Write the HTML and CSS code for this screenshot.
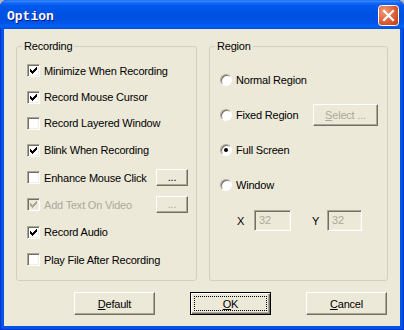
FILE: index.html
```html
<!DOCTYPE html>
<html>
<head>
<meta charset="utf-8">
<link rel="stylesheet" href="styles.css">
</head>
<body>
<div class="window">
  <div class="titlebar">
    <span class="title">Option</span>
    <span class="close">
      <svg width="21" height="21" viewBox="0 0 21 21">
        <defs>
          <radialGradient id="cg" cx="0.3" cy="0.3" r="0.9">
            <stop offset="0" stop-color="#F19A7A"/>
            <stop offset="0.5" stop-color="#E1653E"/>
            <stop offset="1" stop-color="#C23E17"/>
          </radialGradient>
        </defs>
        <rect x="0.5" y="0.5" width="20" height="20" rx="3" fill="url(#cg)" stroke="#fff"/>
        <path d="M6 6 L15 15 M15 6 L6 15" stroke="#fff" stroke-width="2.2" stroke-linecap="square"/>
      </svg>
    </span>
  </div>
  <div class="client">
    <div class="groups">
      <fieldset class="group group-rec">
        <legend>Recording</legend>
        <div class="gbody rec-body">
          <div class="row"><span class="cb"><svg class="chk" width="7" height="7" viewBox="0 0 7 7"><path d="M0 2h1v3h-1z M1 3h1v3h-1z M2 4h1v3h-1z M3 3h1v3h-1z M4 2h1v3h-1z M5 1h1v3h-1z M6 0h1v3h-1z"/></svg></span><span class="lbl">Minimize When Recording</span></div>
          <div class="row"><span class="cb"><svg class="chk" width="7" height="7" viewBox="0 0 7 7"><path d="M0 2h1v3h-1z M1 3h1v3h-1z M2 4h1v3h-1z M3 3h1v3h-1z M4 2h1v3h-1z M5 1h1v3h-1z M6 0h1v3h-1z"/></svg></span><span class="lbl">Record Mouse Cursor</span></div>
          <div class="row"><span class="cb"></span><span class="lbl">Record Layered Window</span></div>
          <div class="row"><span class="cb"><svg class="chk" width="7" height="7" viewBox="0 0 7 7"><path d="M0 2h1v3h-1z M1 3h1v3h-1z M2 4h1v3h-1z M3 3h1v3h-1z M4 2h1v3h-1z M5 1h1v3h-1z M6 0h1v3h-1z"/></svg></span><span class="lbl">Blink When Recording</span></div>
          <div class="row"><span class="cb"></span><span class="lbl">Enhance Mouse Click</span><span class="btn mini">...</span></div>
          <div class="row"><span class="cb cb-dis"><svg class="chk" width="7" height="7" viewBox="0 0 7 7"><path d="M0 2h1v3h-1z M1 3h1v3h-1z M2 4h1v3h-1z M3 3h1v3h-1z M4 2h1v3h-1z M5 1h1v3h-1z M6 0h1v3h-1z"/></svg></span><span class="lbl dis">Add Text On Video</span><span class="btn mini dis">...</span></div>
          <div class="row"><span class="cb"><svg class="chk" width="7" height="7" viewBox="0 0 7 7"><path d="M0 2h1v3h-1z M1 3h1v3h-1z M2 4h1v3h-1z M3 3h1v3h-1z M4 2h1v3h-1z M5 1h1v3h-1z M6 0h1v3h-1z"/></svg></span><span class="lbl">Record Audio</span></div>
          <div class="row"><span class="cb"></span><span class="lbl">Play File After Recording</span></div>
        </div>
      </fieldset>
      <fieldset class="group group-reg">
        <legend>Region</legend>
        <div class="gbody reg-body">
          <div class="rrow"><span class="rb"></span><span class="lbl">Normal Region</span></div>
          <div class="rrow"><span class="rb"></span><span class="lbl">Fixed Region</span><span class="btn sel dis"><u>S</u>elect ...</span></div>
          <div class="rrow"><span class="rb on"></span><span class="lbl">Full Screen</span></div>
          <div class="rrow"><span class="rb"></span><span class="lbl">Window</span></div>
          <div class="xyrow">
            <span class="xl">X</span><span class="edit">32</span>
            <span class="yl">Y</span><span class="edit edit-y">32</span>
          </div>
        </div>
      </fieldset>
    </div>
    <div class="actions">
      <span class="btn big"><u>D</u>efault</span>
      <span class="btn big ok"><u>O</u>K</span>
      <span class="btn big"><u>C</u>ancel</span>
    </div>
  </div>
</div>
</body>
</html>
```
FILE: styles.css
```css
html, body {
  margin: 0;
  padding: 0;
}
body {
  width: 404px;
  height: 330px;
  background: #b8b8b8;
  font-family: "Liberation Sans", Arial, sans-serif;
  font-size: 11px;
  letter-spacing: -0.2px;
  color: #000;
}
.window {
  box-sizing: border-box;
  width: 404px;
  height: 330px;
  display: flex;
  flex-direction: column;
  background: #0055E5;
  box-shadow: inset 1px 0 #0831D9, inset -1px 0 #0831D9, inset 0 -1px #0831D9;
  border-radius: 7px 7px 0 0;
  overflow: hidden;
}
.titlebar {
  flex: none;
  height: 29px;
  box-sizing: border-box;
  display: flex;
  justify-content: space-between;
  align-items: flex-start;
  padding: 0 5px 0 7px;
  background: linear-gradient(180deg, #0A5FF7 0px, #3D8EFF 1px, #1566F5 3px, #0058EE 6px, #0050E0 16px, #0054E6 23px, #0062F6 26px, #004EDC 29px);
  border-radius: 7px 7px 0 0;
}
.title {
  font-family: "Liberation Mono", "Courier New", monospace;
  font-weight: bold;
  font-size: 13px;
  letter-spacing: 0;
  line-height: 15px;
  margin-top: 9px;
  color: #fff;
  text-shadow: 1px 1px #0A1A8A;
}
.close {
  display: block;
  width: 21px;
  height: 21px;
  margin-top: 5px;
}
.close svg {
  display: block;
}
.client {
  flex: 1;
  margin: 0 4px 4px;
  background: #ECE9D8;
  padding: 11px 12px 0;
  display: flex;
  flex-direction: column;
}
.groups {
  display: flex;
  gap: 12px;
  height: 241px;
}
.group {
  box-sizing: border-box;
  margin: 0;
  padding: 0;
  height: 241px;
  min-inline-size: 0;
  border: 1px solid #D0D0BF;
  border-radius: 3px;
}
.group-rec {
  width: 181px;
}
.group-reg {
  width: 179px;
}
legend {
  margin-left: 5px;
  padding: 0 2px;
  font-size: 11px;
  line-height: 13px;
}
.rec-body {
  padding: 4px 8px 0 10px;
  display: grid;
  grid-template-rows: 27px 26px 26px 28px 27px 27px 28px 27px;
}
.reg-body {
  padding: 9px 9px 0 10px;
}
.row {
  display: flex;
  align-items: center;
}
.rrow {
  height: 35px;
  display: flex;
  align-items: center;
}
.lbl {
  margin-left: 4px;
  white-space: nowrap;
}
.dis {
  color: #ACA899;
}
.cb {
  box-sizing: border-box;
  flex: none;
  width: 13px;
  height: 13px;
  border: 1px solid;
  border-color: #ACA899 #fff #fff #ACA899;
  box-shadow: inset 1px 1px #716F64, inset -1px -1px #F1EFE2;
  background: #fff;
  display: flex;
  align-items: center;
  justify-content: center;
}
.chk {
  display: block;
  fill: #000;
  shape-rendering: crispEdges;
}
.cb-dis {
  background: #ECE9D8;
}
.cb-dis .chk {
  fill: #ACA899;
}
.rb {
  box-sizing: border-box;
  flex: none;
  width: 12px;
  height: 12px;
  border-radius: 50%;
  border: 1px solid;
  border-color: #ACA899 #fff #fff #ACA899;
  box-shadow: inset 1px 1px #716F64;
  background: #fff;
  display: flex;
  align-items: center;
  justify-content: center;
}
.rb.on::after {
  content: "";
  width: 4px;
  height: 4px;
  border-radius: 50%;
  background: #000;
}
.btn {
  box-sizing: border-box;
  display: flex;
  align-items: center;
  justify-content: center;
  background: #ECE9D8;
  border: 1px solid;
  border-color: #fff #716F64 #716F64 #fff;
  box-shadow: inset -1px -1px #ACA899;
  white-space: nowrap;
}
.mini {
  margin-left: auto;
  width: 32px;
  height: 17px;
  padding-bottom: 2px;
}
.sel {
  margin-left: auto;
  width: 65px;
  height: 22px;
}
.xyrow {
  height: 37px;
  display: flex;
  align-items: center;
  padding-left: 17px;
}
.xl {
  width: 17px;
}
.yl {
  width: 15px;
  margin-left: 21px;
}
.edit {
  box-sizing: border-box;
  width: 37px;
  height: 21px;
  border: 1px solid;
  border-color: #ACA899 #fff #fff #ACA899;
  box-shadow: inset 1px 1px #716F64, inset -1px -1px #F1EFE2;
  color: #ACA899;
  padding-left: 4px;
  line-height: 19px;
}
.edit-y {
  width: 35px;
}
.actions {
  display: flex;
  justify-content: flex-end;
  gap: 35px;
  margin-top: 11px;
  padding-right: 1px;
}
.big {
  width: 81px;
  height: 23px;
}
.ok {
  border: 1px solid #000;
  box-shadow: inset 1px 1px #fff, inset -1px -1px #716F64, inset -2px -2px #ACA899;
  outline: 1px dotted #000;
  outline-offset: -5px;
}
```
